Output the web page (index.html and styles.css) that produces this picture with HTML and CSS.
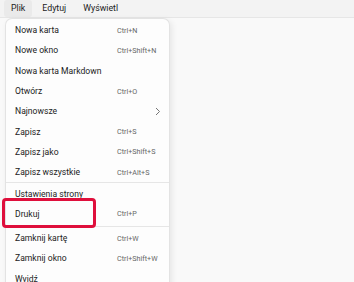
FILE: index.html
```html
<!DOCTYPE html>
<html lang="pl">
<head>
<meta charset="utf-8">
<link rel="stylesheet" href="styles.css">
</head>
<body>
<div class="menubar">
  <div class="mb-item active">Plik</div>
  <div class="mb-item">Edytuj</div>
  <div class="mb-item">Wyświetl</div>
</div>
<div class="content">
  <div class="menu">
    <div class="item"><span class="label">Nowa karta</span><span class="key">Ctrl+N</span></div>
    <div class="item"><span class="label">Nowe okno</span><span class="key">Ctrl+Shift+N</span></div>
    <div class="item"><span class="label">Nowa karta Markdown</span><span class="key"></span></div>
    <div class="item"><span class="label">Otwórz</span><span class="key">Ctrl+O</span></div>
    <div class="item"><span class="label">Najnowsze</span><span class="key chev"><svg width="6" height="9" viewBox="0 0 6 9"><path d="M1 1 L4.5 4.5 L1 8" fill="none" stroke="#666" stroke-width="0.9"/></svg></span></div>
    <div class="item"><span class="label">Zapisz</span><span class="key">Ctrl+S</span></div>
    <div class="item"><span class="label">Zapisz jako</span><span class="key">Ctrl+Shift+S</span></div>
    <div class="item"><span class="label">Zapisz wszystkie</span><span class="key">Ctrl+Alt+S</span></div>
    <div class="sep"></div>
    <div class="item"><span class="label">Ustawienia strony</span><span class="key"></span></div>
    <div class="item"><span class="label">Drukuj</span><span class="key">Ctrl+P</span></div>
    <div class="sep sep2"></div>
    <div class="item"><span class="label">Zamknij kartę</span><span class="key">Ctrl+W</span></div>
    <div class="item"><span class="label">Zamknij okno</span><span class="key">Ctrl+Shift+W</span></div>
    <div class="item"><span class="label">Wyjdź</span><span class="key"></span></div>
  </div>
  <div class="highlight"></div>
</div>
</body>
</html>
```
FILE: styles.css
```css
* { box-sizing: border-box; }
html, body { margin: 0; padding: 0; }
body {
  width: 354px;
  height: 282px;
  overflow: hidden;
  background: #f9f9f9;
  font-family: Roboto, "Liberation Sans", sans-serif;
  color: #222;
  position: relative;
}
.menubar {
  height: 18px;
  background: #f3f3f3;
  border-bottom: 1px solid #e6e6e6;
  display: flex;
  align-items: stretch;
  padding-left: 4px;
  gap: 3px;
}
.mb-item {
  font-size: 8.8px;
  line-height: 16px;
  padding: 0 7px;
  color: #222;
  border-radius: 3px;
}
.mb-item.active { background: #eaeaea; }
.content {
  position: relative;
  height: 264px;
}
.menu {
  position: absolute;
  left: 5px;
  top: 0;
  width: 165px;
  height: 280px;
  background: #fdfdfd;
  border: 1px solid #e3e3e3;
  border-bottom: none;
  border-radius: 7px 7px 0 0;
  box-shadow: 2px 2px 6px rgba(0,0,0,0.08);
  padding-top: 1px;
  display: flex;
  flex-direction: column;
}
.item {
  height: 20.3px;
  display: grid;
  grid-template-columns: 102px 1fr;
  align-items: center;
  padding-left: 9px;
  flex-shrink: 0;
}
.label {
  font-size: 8.6px;
  white-space: nowrap;
}
.key {
  font-size: 7.2px;
  color: #666;
  white-space: nowrap;
}
.chev {
  padding-left: 38px;
  display: flex;
  align-items: center;
}
.sep {
  height: 1px;
  background: #e6e6e6;
  flex-shrink: 0;
}
.sep2 { margin: 2px 0 1px; }
.highlight {
  position: absolute;
  left: 2px;
  top: 180px;
  width: 94px;
  height: 30px;
  border: 3px solid #df0f3c;
  border-radius: 4px;
}
```
